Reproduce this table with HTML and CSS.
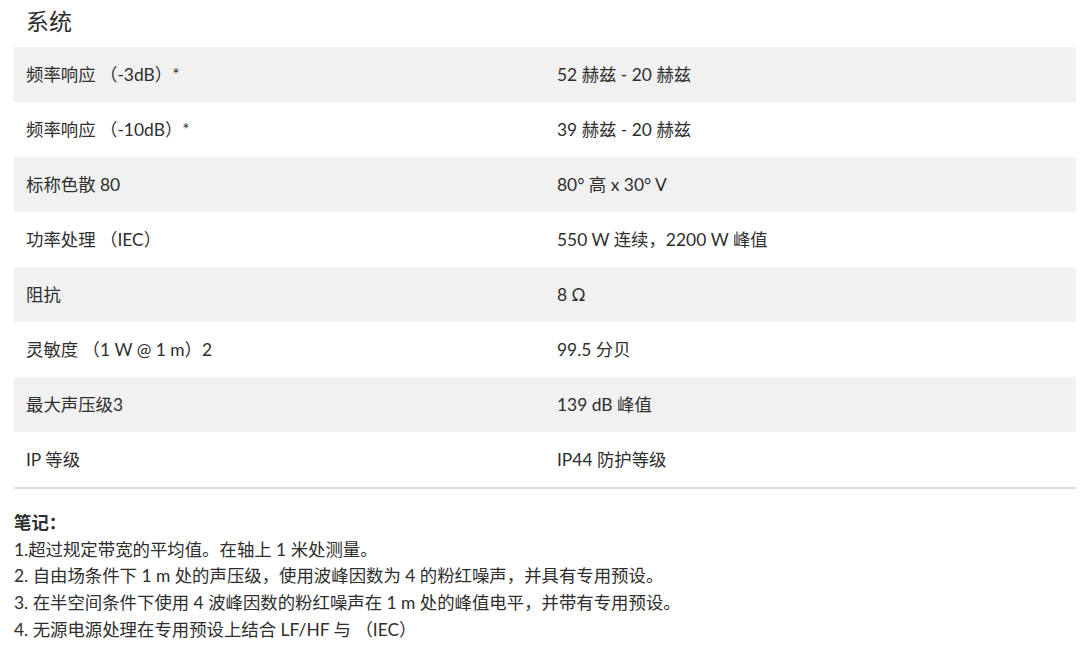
FILE: index.html
```html
<!DOCTYPE html>
<html lang="zh-CN">
<head>
<meta charset="utf-8">
<link rel="stylesheet" href="styles.css">
</head>
<body>
<div class="page">
  <h2 class="title">系统</h2>
  <div class="specs">
    <div class="row"><div class="cell">频率响应 （-3dB）*</div><div class="cell">52 赫兹 - 20 赫兹</div></div>
    <div class="row"><div class="cell">频率响应 （-10dB）*</div><div class="cell">39 赫兹 - 20 赫兹</div></div>
    <div class="row"><div class="cell">标称色散 80</div><div class="cell">80° 高 x 30° V</div></div>
    <div class="row"><div class="cell">功率处理 （IEC）</div><div class="cell">550 W 连续，2200 W 峰值</div></div>
    <div class="row"><div class="cell">阻抗</div><div class="cell">8 Ω</div></div>
    <div class="row"><div class="cell">灵敏度 （1 W @ 1 m）2</div><div class="cell">99.5 分贝</div></div>
    <div class="row"><div class="cell">最大声压级3</div><div class="cell">139 dB 峰值</div></div>
    <div class="row"><div class="cell">IP 等级</div><div class="cell">IP44 防护等级</div></div>
  </div>
  <div class="notes">
    <p class="notes-head">笔记：</p>
    <p>1.超过规定带宽的平均值。在轴上 1 米处测量。</p>
    <p>2. 自由场条件下 1 m 处的声压级，使用波峰因数为 4 的粉红噪声，并具有专用预设。</p>
    <p>3. 在半空间条件下使用 4 波峰因数的粉红噪声在 1 m 处的峰值电平，并带有专用预设。</p>
    <p>4. 无源电源处理在专用预设上结合 LF/HF 与 （IEC）</p>
  </div>
</div>
</body>
</html>
```
FILE: styles.css
```css
html, body {
  margin: 0;
  padding: 0;
  background: #fff;
}
body {
  font-family: "Lato", "Noto Sans CJK SC", sans-serif;
  color: #2e2e2e;
  font-size: 17.4px;
}
.page {
  padding: 0 11px 0 14px;
}
.title {
  margin: 0;
  padding: 5px 0 0 12px;
  height: 47px;
  box-sizing: border-box;
  font-size: 23px;
  font-weight: normal;
  line-height: 32px;
}
.specs {
  border-bottom: 2px solid #ddd;
}
.row {
  display: grid;
  grid-template-columns: 1fr 1fr;
}
.row:nth-child(odd) {
  background: #f1f1f1;
}
.cell {
  padding: 15px 12px;
  line-height: 25px;
}
.notes {
  padding-top: 21px;
}
.notes p {
  margin: 0;
  line-height: 26.7px;
}
.notes .notes-head {
  font-weight: bold;
}
```
